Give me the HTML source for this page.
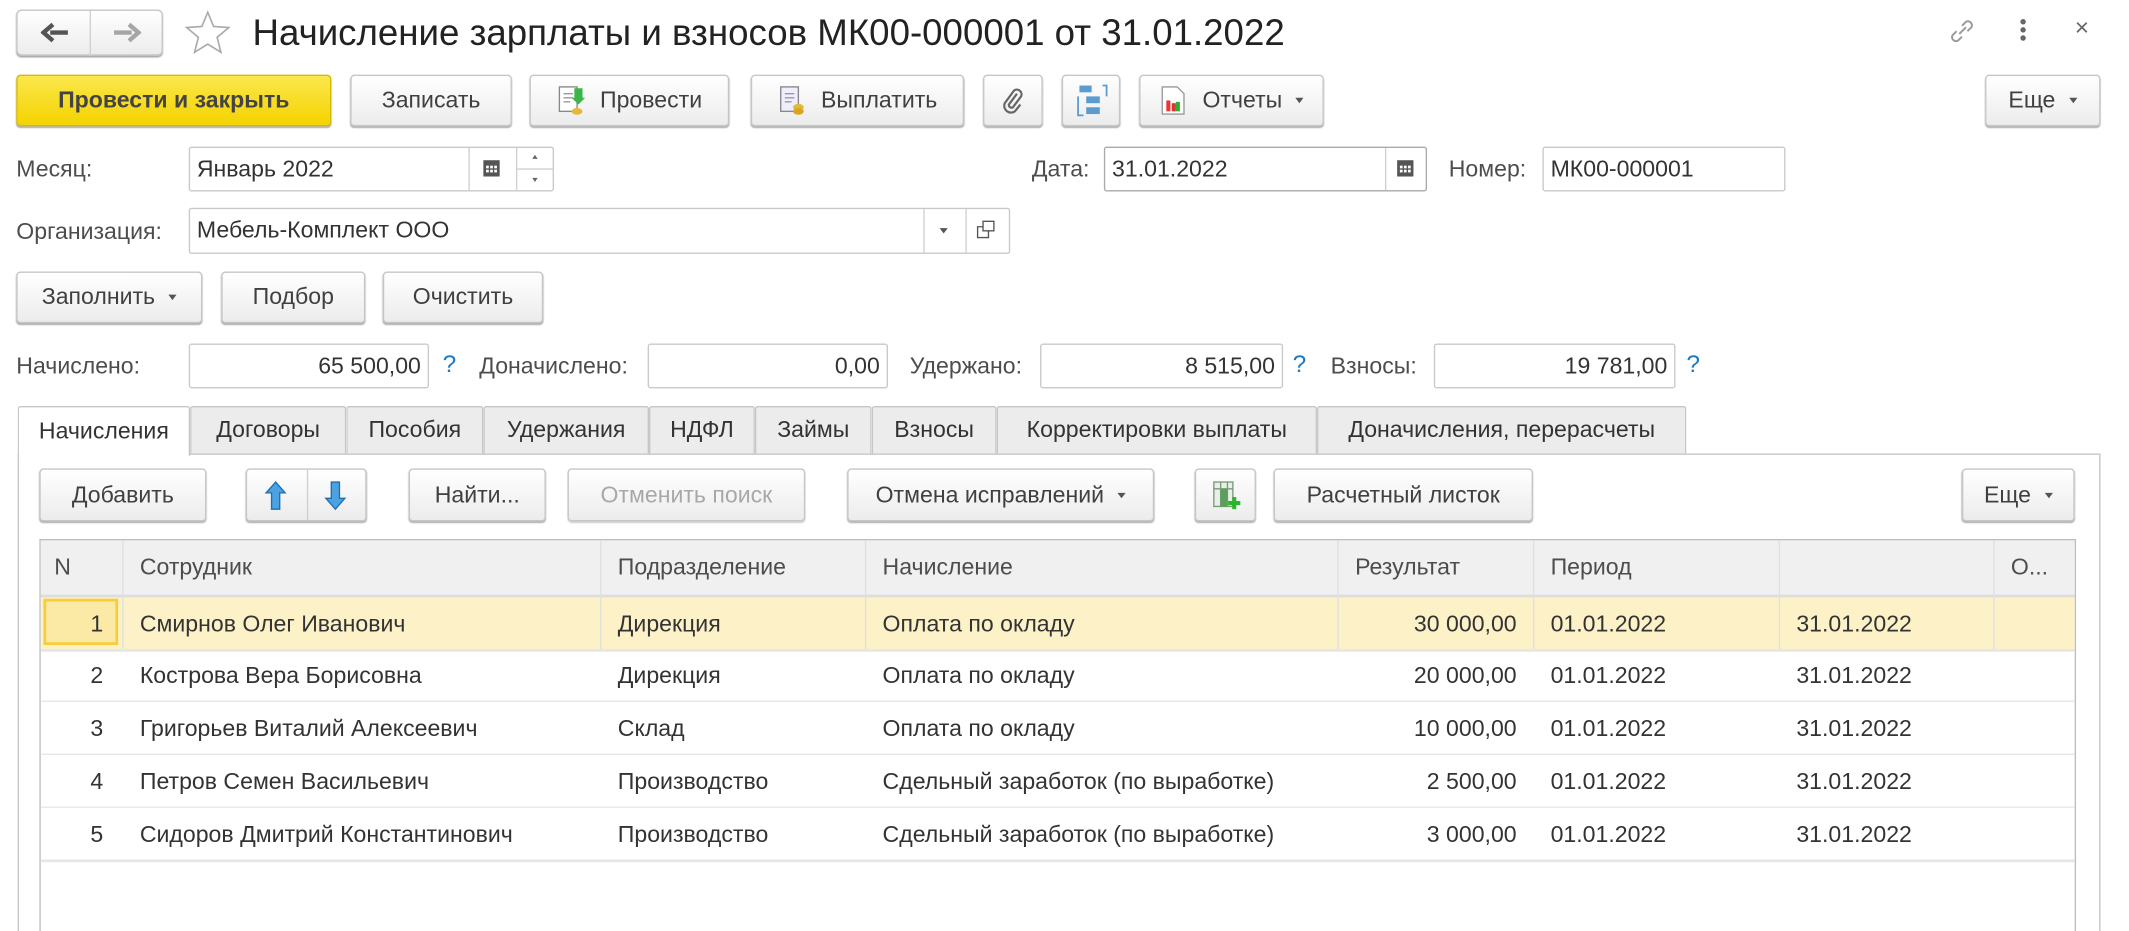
<!DOCTYPE html>
<html><head><meta charset="utf-8">
<style>
html,body{margin:0;padding:0;background:#fff;overflow:hidden}
body{width:2129px;height:931px;position:relative}
#w{position:absolute;left:0;top:0;width:1568px;height:686px;transform:scale(1.35778);transform-origin:0 0;font-family:"Liberation Sans",Arial,sans-serif;font-size:17px;color:#333}
.a{position:absolute}
.b{position:absolute;box-sizing:border-box;border:1px solid #c6c6c6;border-radius:3px;background:linear-gradient(#ffffff,#ececec);box-shadow:0 1px 1px #a9a9a9;display:flex;align-items:center;justify-content:center;color:#404040;white-space:nowrap}
.i{position:absolute;box-sizing:border-box;border:1px solid #c9c9c9;border-radius:2px;background:#fff;display:flex;align-items:center;padding:0 5px;white-space:nowrap;color:#333}
.l{position:absolute;color:#4d4d4d;white-space:nowrap}
.q{position:absolute;color:#1a7ac4;font-size:18px}
.dd{display:inline-block;width:0;height:0;border-left:3px solid transparent;border-right:3px solid transparent;border-top:4px solid #555;margin-left:10px;vertical-align:middle}
.tab{position:absolute;top:299px;height:35px;box-sizing:border-box;border:1px solid #c6c6c6;border-bottom:none;background:#ececec;display:flex;align-items:center;justify-content:center;color:#333;white-space:nowrap;border-radius:2px 2px 0 0}
.c{position:absolute;white-space:nowrap;color:#333}
.vl{position:absolute;width:1px;background:#e0e0e0}
.hl{position:absolute;height:1px;left:30px;width:1498px;background:#e6e6e6}
</style></head><body><div id="w">

<!-- nav -->
<div class="b" style="left:12px;top:7px;width:108px;height:34px;border-radius:4px"></div>
<div class="a" style="left:66px;top:8px;width:1px;height:33px;background:#d0d0d0"></div>
<svg class="a" style="left:30px;top:16px" width="22" height="16" viewBox="0 0 22 16"><path d="M20 8H7M9 2L2 8l7 6" fill="none" stroke="#555" stroke-width="3.2"/></svg>
<svg class="a" style="left:82px;top:16px" width="22" height="16" viewBox="0 0 22 16"><path d="M2 8h13M13 2l7 6-7 6" fill="none" stroke="#a6a6a6" stroke-width="3.2"/></svg>
<svg class="a" style="left:135px;top:7px" width="36" height="34" viewBox="0 0 36 34"><path d="M18 2l4.3 10.5 11.2.8-8.6 7.2 2.8 11L18 25.5 8.3 31.5l2.8-11-8.6-7.2 11.2-.8z" fill="none" stroke="#aaa" stroke-width="1.2"/></svg>
<div class="a" style="left:186px;top:9px;font-size:27px;color:#222;white-space:nowrap">Начисление зарплаты и взносов МК00-000001 от 31.01.2022</div>
<svg class="a" style="left:1433px;top:11px" width="24" height="24" viewBox="0 0 24 24"><path d="M10 14l5-5M8 12l-3 3a3 3 0 0 0 4 4l3-3M16 12l3-3a3 3 0 0 0-4-4l-3 3" fill="none" stroke="#999" stroke-width="1.4"/></svg>
<div class="a" style="left:1488px;top:14px;width:4px;height:4px;background:#666;border-radius:2px;box-shadow:0 6px 0 #666,0 12px 0 #666"></div>
<div class="a" style="left:1528px;top:10px;font-size:18px;color:#666">×</div>

<!-- toolbar -->
<div class="b" style="left:12px;top:55px;width:232px;height:38px;background:linear-gradient(#fbe74c,#f4d300);border-color:#d6b900;font-weight:bold;color:#444">Провести и закрыть</div>
<div class="b" style="left:258px;top:55px;width:119px;height:38px">Записать</div>
<div class="b" style="left:390px;top:55px;width:147px;height:38px"><svg width="22" height="24" viewBox="0 0 22 24" style="margin-right:10px"><rect x="2" y="2" width="13" height="18" fill="#fff" stroke="#888"/><path d="M5 7h7M5 10h7M5 13h5" stroke="#999"/><path d="M13 3h6v7h2l-5 5-5-5h2z" fill="#3bb54a"/><ellipse cx="15" cy="20" rx="4" ry="2.5" fill="#e6b83a"/></svg>Провести</div>
<div class="b" style="left:553px;top:55px;width:157px;height:38px"><svg width="22" height="24" viewBox="0 0 22 24" style="margin-right:10px"><rect x="2" y="2" width="13" height="18" fill="#eef" stroke="#888"/><path d="M5 7h7M5 10h7M5 13h5" stroke="#999"/><ellipse cx="15" cy="17" rx="4" ry="2.5" fill="#e6b83a"/><ellipse cx="15" cy="20" rx="4" ry="2.5" fill="#d9a520"/></svg>Выплатить</div>
<div class="b" style="left:724px;top:55px;width:44px;height:38px"><svg width="16" height="22" viewBox="0 0 16 22"><path d="M11 6l-6 8a2 2 0 0 0 3 2l6-8a3.5 3.5 0 0 0-5-4.5L2 13a5 5 0 0 0 7.5 6l4-5" fill="none" stroke="#666" stroke-width="1.6"/></svg></div>
<div class="b" style="left:782px;top:55px;width:43px;height:38px"><svg width="24" height="26" viewBox="0 0 24 26"><rect x="3" y="2" width="9" height="5" fill="#5a9bd0"/><rect x="8" y="10" width="10" height="5" fill="#5a9bd0"/><rect x="8" y="18" width="10" height="5" fill="#5a9bd0"/><path d="M2 10v14h4M20 2h3v8" fill="none" stroke="#5a9bd0" stroke-width="1.3"/></svg></div>
<div class="b" style="left:839px;top:55px;width:136px;height:38px"><svg width="20" height="24" viewBox="0 0 20 24" style="margin-right:12px"><path d="M2 2h11l5 5v15H2z" fill="#fff" stroke="#999"/><rect x="5" y="12" width="3" height="8" fill="#e33"/><rect x="9" y="14" width="3" height="6" fill="#d33"/><rect x="12" y="13" width="3" height="7" fill="#3a3"/></svg>Отчеты<span class="dd"></span></div>
<div class="b" style="left:1462px;top:55px;width:85px;height:38px">Еще<span class="dd"></span></div>

<!-- month row -->
<div class="l" style="left:12px;top:115px">Месяц:</div>
<div class="i" style="left:139px;top:108px;width:269px;height:33px">Январь 2022</div>
<div class="a" style="left:345px;top:109px;width:1px;height:31px;background:#d0d0d0"></div>
<div class="a" style="left:380px;top:109px;width:1px;height:31px;background:#d0d0d0"></div>
<div class="a" style="left:381px;top:124px;width:26px;height:1px;background:#d0d0d0"></div>
<svg class="a" style="left:355px;top:116px" width="14" height="15" viewBox="0 0 14 15"><rect x="1" y="2" width="12" height="12" fill="#555"/><g fill="#fff"><rect x="3" y="6" width="2" height="2"/><rect x="6" y="6" width="2" height="2"/><rect x="9" y="6" width="2" height="2"/><rect x="3" y="9" width="2" height="2"/><rect x="6" y="9" width="2" height="2"/><rect x="9" y="9" width="2" height="2"/></g></svg>
<div class="a" style="left:392px;top:114px;border-left:2px solid transparent;border-right:2px solid transparent;border-bottom:3px solid #666"></div>
<div class="a" style="left:392px;top:131px;border-left:2px solid transparent;border-right:2px solid transparent;border-top:3px solid #666"></div>

<div class="l" style="left:760px;top:115px">Дата:</div>
<div class="i" style="left:813px;top:108px;width:238px;height:33px;border-color:#aaa">31.01.2022</div>
<div class="a" style="left:1020px;top:109px;width:1px;height:31px;background:#d0d0d0"></div>
<svg class="a" style="left:1028px;top:116px" width="14" height="15" viewBox="0 0 14 15"><rect x="1" y="2" width="12" height="12" fill="#555"/><g fill="#fff"><rect x="3" y="6" width="2" height="2"/><rect x="6" y="6" width="2" height="2"/><rect x="9" y="6" width="2" height="2"/><rect x="3" y="9" width="2" height="2"/><rect x="6" y="9" width="2" height="2"/><rect x="9" y="9" width="2" height="2"/></g></svg>
<div class="l" style="left:1067px;top:115px">Номер:</div>
<div class="i" style="left:1136px;top:108px;width:179px;height:33px">МК00-000001</div>

<!-- org -->
<div class="l" style="left:12px;top:161px">Организация:</div>
<div class="i" style="left:139px;top:153px;width:605px;height:34px">Мебель-Комплект ООО</div>
<div class="a" style="left:680px;top:154px;width:1px;height:32px;background:#d0d0d0"></div>
<div class="a" style="left:711px;top:154px;width:1px;height:32px;background:#d0d0d0"></div>
<div class="a" style="left:692px;top:168px;border-left:3px solid transparent;border-right:3px solid transparent;border-top:4px solid #555"></div>
<svg class="a" style="left:719px;top:162px" width="14" height="14" viewBox="0 0 14 14"><rect x="5" y="1" width="8" height="7" fill="none" stroke="#555"/><path d="M5 5H1v8h8V8" fill="none" stroke="#555"/></svg>

<!-- fill buttons -->
<div class="b" style="left:12px;top:200px;width:137px;height:38px">Заполнить<span class="dd"></span></div>
<div class="b" style="left:163px;top:200px;width:106px;height:38px">Подбор</div>
<div class="b" style="left:282px;top:200px;width:118px;height:38px">Очистить</div>

<!-- totals -->
<div class="l" style="left:12px;top:260px">Начислено:</div>
<div class="i" style="left:139px;top:253px;width:177px;height:33px;justify-content:flex-end">65 500,00</div>
<div class="q" style="left:326px;top:258px">?</div>
<div class="l" style="left:353px;top:260px">Доначислено:</div>
<div class="i" style="left:477px;top:253px;width:177px;height:33px;justify-content:flex-end">0,00</div>
<div class="l" style="left:670px;top:260px">Удержано:</div>
<div class="i" style="left:766px;top:253px;width:179px;height:33px;justify-content:flex-end">8 515,00</div>
<div class="q" style="left:952px;top:258px">?</div>
<div class="l" style="left:980px;top:260px">Взносы:</div>
<div class="i" style="left:1056px;top:253px;width:178px;height:33px;justify-content:flex-end">19 781,00</div>
<div class="q" style="left:1242px;top:258px">?</div>

<!-- tabs -->
<div class="a" style="left:13px;top:334px;width:1534px;height:360px;box-sizing:border-box;border:1px solid #c6c6c6"></div>
<div class="tab" style="left:13px;width:127px;background:#fff;height:37px;z-index:2">Начисления</div>
<div class="tab" style="left:140px;width:115px">Договоры</div>
<div class="tab" style="left:255px;width:101px">Пособия</div>
<div class="tab" style="left:356px;width:122px">Удержания</div>
<div class="tab" style="left:478px;width:78px">НДФЛ</div>
<div class="tab" style="left:556px;width:86px">Займы</div>
<div class="tab" style="left:642px;width:92px">Взносы</div>
<div class="tab" style="left:734px;width:236px">Корректировки выплаты</div>
<div class="tab" style="left:970px;width:272px">Доначисления, перерасчеты</div>

<!-- inner toolbar -->
<div class="b" style="left:29px;top:345px;width:123px;height:39px">Добавить</div>
<div class="b" style="left:181px;top:345px;width:89px;height:39px"></div>
<div class="a" style="left:226px;top:346px;width:1px;height:37px;background:#d0d0d0"></div>
<svg class="a" style="left:194px;top:354px" width="18" height="22" viewBox="0 0 18 22"><path d="M9 1L2 9h4v12h6V9h4z" fill="#4aa3e0" stroke="#1f6fb0"/></svg>
<svg class="a" style="left:238px;top:354px" width="18" height="22" viewBox="0 0 18 22"><path d="M9 21L2 13h4V1h6v12h4z" fill="#4aa3e0" stroke="#1f6fb0"/></svg>
<div class="b" style="left:301px;top:345px;width:101px;height:39px">Найти...</div>
<div class="b" style="left:418px;top:345px;width:175px;height:39px;color:#a8a8a8;box-shadow:0 1px 1px #ccc">Отменить поиск</div>
<div class="b" style="left:624px;top:345px;width:226px;height:39px">Отмена исправлений<span class="dd"></span></div>
<div class="b" style="left:880px;top:345px;width:45px;height:39px"><svg width="22" height="24" viewBox="0 0 22 24"><rect x="2" y="2" width="14" height="18" fill="#e8efe8" stroke="#7a9a7a"/><path d="M2 7h14M7 2v18M12 2v18" stroke="#7a9a7a"/><rect x="7" y="7" width="5" height="13" fill="#5aa05a"/><path d="M17 13v9M12.5 17.5h9" stroke="#2bb52b" stroke-width="3"/></svg></div>
<div class="b" style="left:938px;top:345px;width:191px;height:39px">Расчетный листок</div>
<div class="b" style="left:1445px;top:345px;width:83px;height:39px">Еще<span class="dd"></span></div>

<!-- table -->
<div class="a" style="left:29px;top:397px;width:1500px;height:300px;box-sizing:border-box;border:1px solid #bdbdbd;border-bottom:none"></div>
<div class="a" style="left:30px;top:398px;width:1498px;height:40px;background:#f0f0f0;border-bottom:2px solid #ddd"></div>
<div class="a" style="left:30px;top:440px;width:1498px;height:38px;background:#fdf1c8"></div>
<div class="a" style="left:32px;top:441px;width:55px;height:34px;box-sizing:border-box;border:2px solid #f6cd3a;background:#fbe9a6"></div>
<div class="vl" style="left:90px;top:398px;height:80px"></div>
<div class="vl" style="left:442px;top:398px;height:80px"></div>
<div class="vl" style="left:637px;top:398px;height:80px"></div>
<div class="vl" style="left:985px;top:398px;height:80px"></div>
<div class="vl" style="left:1129px;top:398px;height:80px"></div>
<div class="vl" style="left:1310px;top:398px;height:80px"></div>
<div class="vl" style="left:1468px;top:398px;height:80px"></div>
<div class="hl" style="top:478px;height:2px"></div>
<div class="hl" style="top:516px"></div>
<div class="hl" style="top:555px"></div>
<div class="hl" style="top:594px"></div>
<div class="hl" style="top:633px;height:2px"></div>

<div class="c" style="left:40px;top:408px;color:#4d4d4d">N</div>
<div class="c" style="left:103px;top:408px;color:#4d4d4d">Сотрудник</div>
<div class="c" style="left:455px;top:408px;color:#4d4d4d">Подразделение</div>
<div class="c" style="left:650px;top:408px;color:#4d4d4d">Начисление</div>
<div class="c" style="left:998px;top:408px;color:#4d4d4d">Результат</div>
<div class="c" style="left:1142px;top:408px;color:#4d4d4d">Период</div>
<div class="c" style="left:1481px;top:408px;color:#4d4d4d">О...</div>

<div class="c" style="right:1492px;top:450px">1</div>
<div class="c" style="left:103px;top:450px">Смирнов Олег Иванович</div>
<div class="c" style="left:455px;top:450px">Дирекция</div>
<div class="c" style="left:650px;top:450px">Оплата по окладу</div>
<div class="c" style="right:451px;top:450px">30 000,00</div>
<div class="c" style="left:1142px;top:450px">01.01.2022</div>
<div class="c" style="left:1323px;top:450px">31.01.2022</div>

<div class="c" style="right:1492px;top:488px">2</div>
<div class="c" style="left:103px;top:488px">Кострова Вера Борисовна</div>
<div class="c" style="left:455px;top:488px">Дирекция</div>
<div class="c" style="left:650px;top:488px">Оплата по окладу</div>
<div class="c" style="right:451px;top:488px">20 000,00</div>
<div class="c" style="left:1142px;top:488px">01.01.2022</div>
<div class="c" style="left:1323px;top:488px">31.01.2022</div>

<div class="c" style="right:1492px;top:527px">3</div>
<div class="c" style="left:103px;top:527px">Григорьев Виталий Алексеевич</div>
<div class="c" style="left:455px;top:527px">Склад</div>
<div class="c" style="left:650px;top:527px">Оплата по окладу</div>
<div class="c" style="right:451px;top:527px">10 000,00</div>
<div class="c" style="left:1142px;top:527px">01.01.2022</div>
<div class="c" style="left:1323px;top:527px">31.01.2022</div>

<div class="c" style="right:1492px;top:566px">4</div>
<div class="c" style="left:103px;top:566px">Петров Семен Васильевич</div>
<div class="c" style="left:455px;top:566px">Производство</div>
<div class="c" style="left:650px;top:566px">Сдельный заработок (по выработке)</div>
<div class="c" style="right:451px;top:566px">2 500,00</div>
<div class="c" style="left:1142px;top:566px">01.01.2022</div>
<div class="c" style="left:1323px;top:566px">31.01.2022</div>

<div class="c" style="right:1492px;top:605px">5</div>
<div class="c" style="left:103px;top:605px">Сидоров Дмитрий Константинович</div>
<div class="c" style="left:455px;top:605px">Производство</div>
<div class="c" style="left:650px;top:605px">Сдельный заработок (по выработке)</div>
<div class="c" style="right:451px;top:605px">3 000,00</div>
<div class="c" style="left:1142px;top:605px">01.01.2022</div>
<div class="c" style="left:1323px;top:605px">31.01.2022</div>

</div></body></html>
